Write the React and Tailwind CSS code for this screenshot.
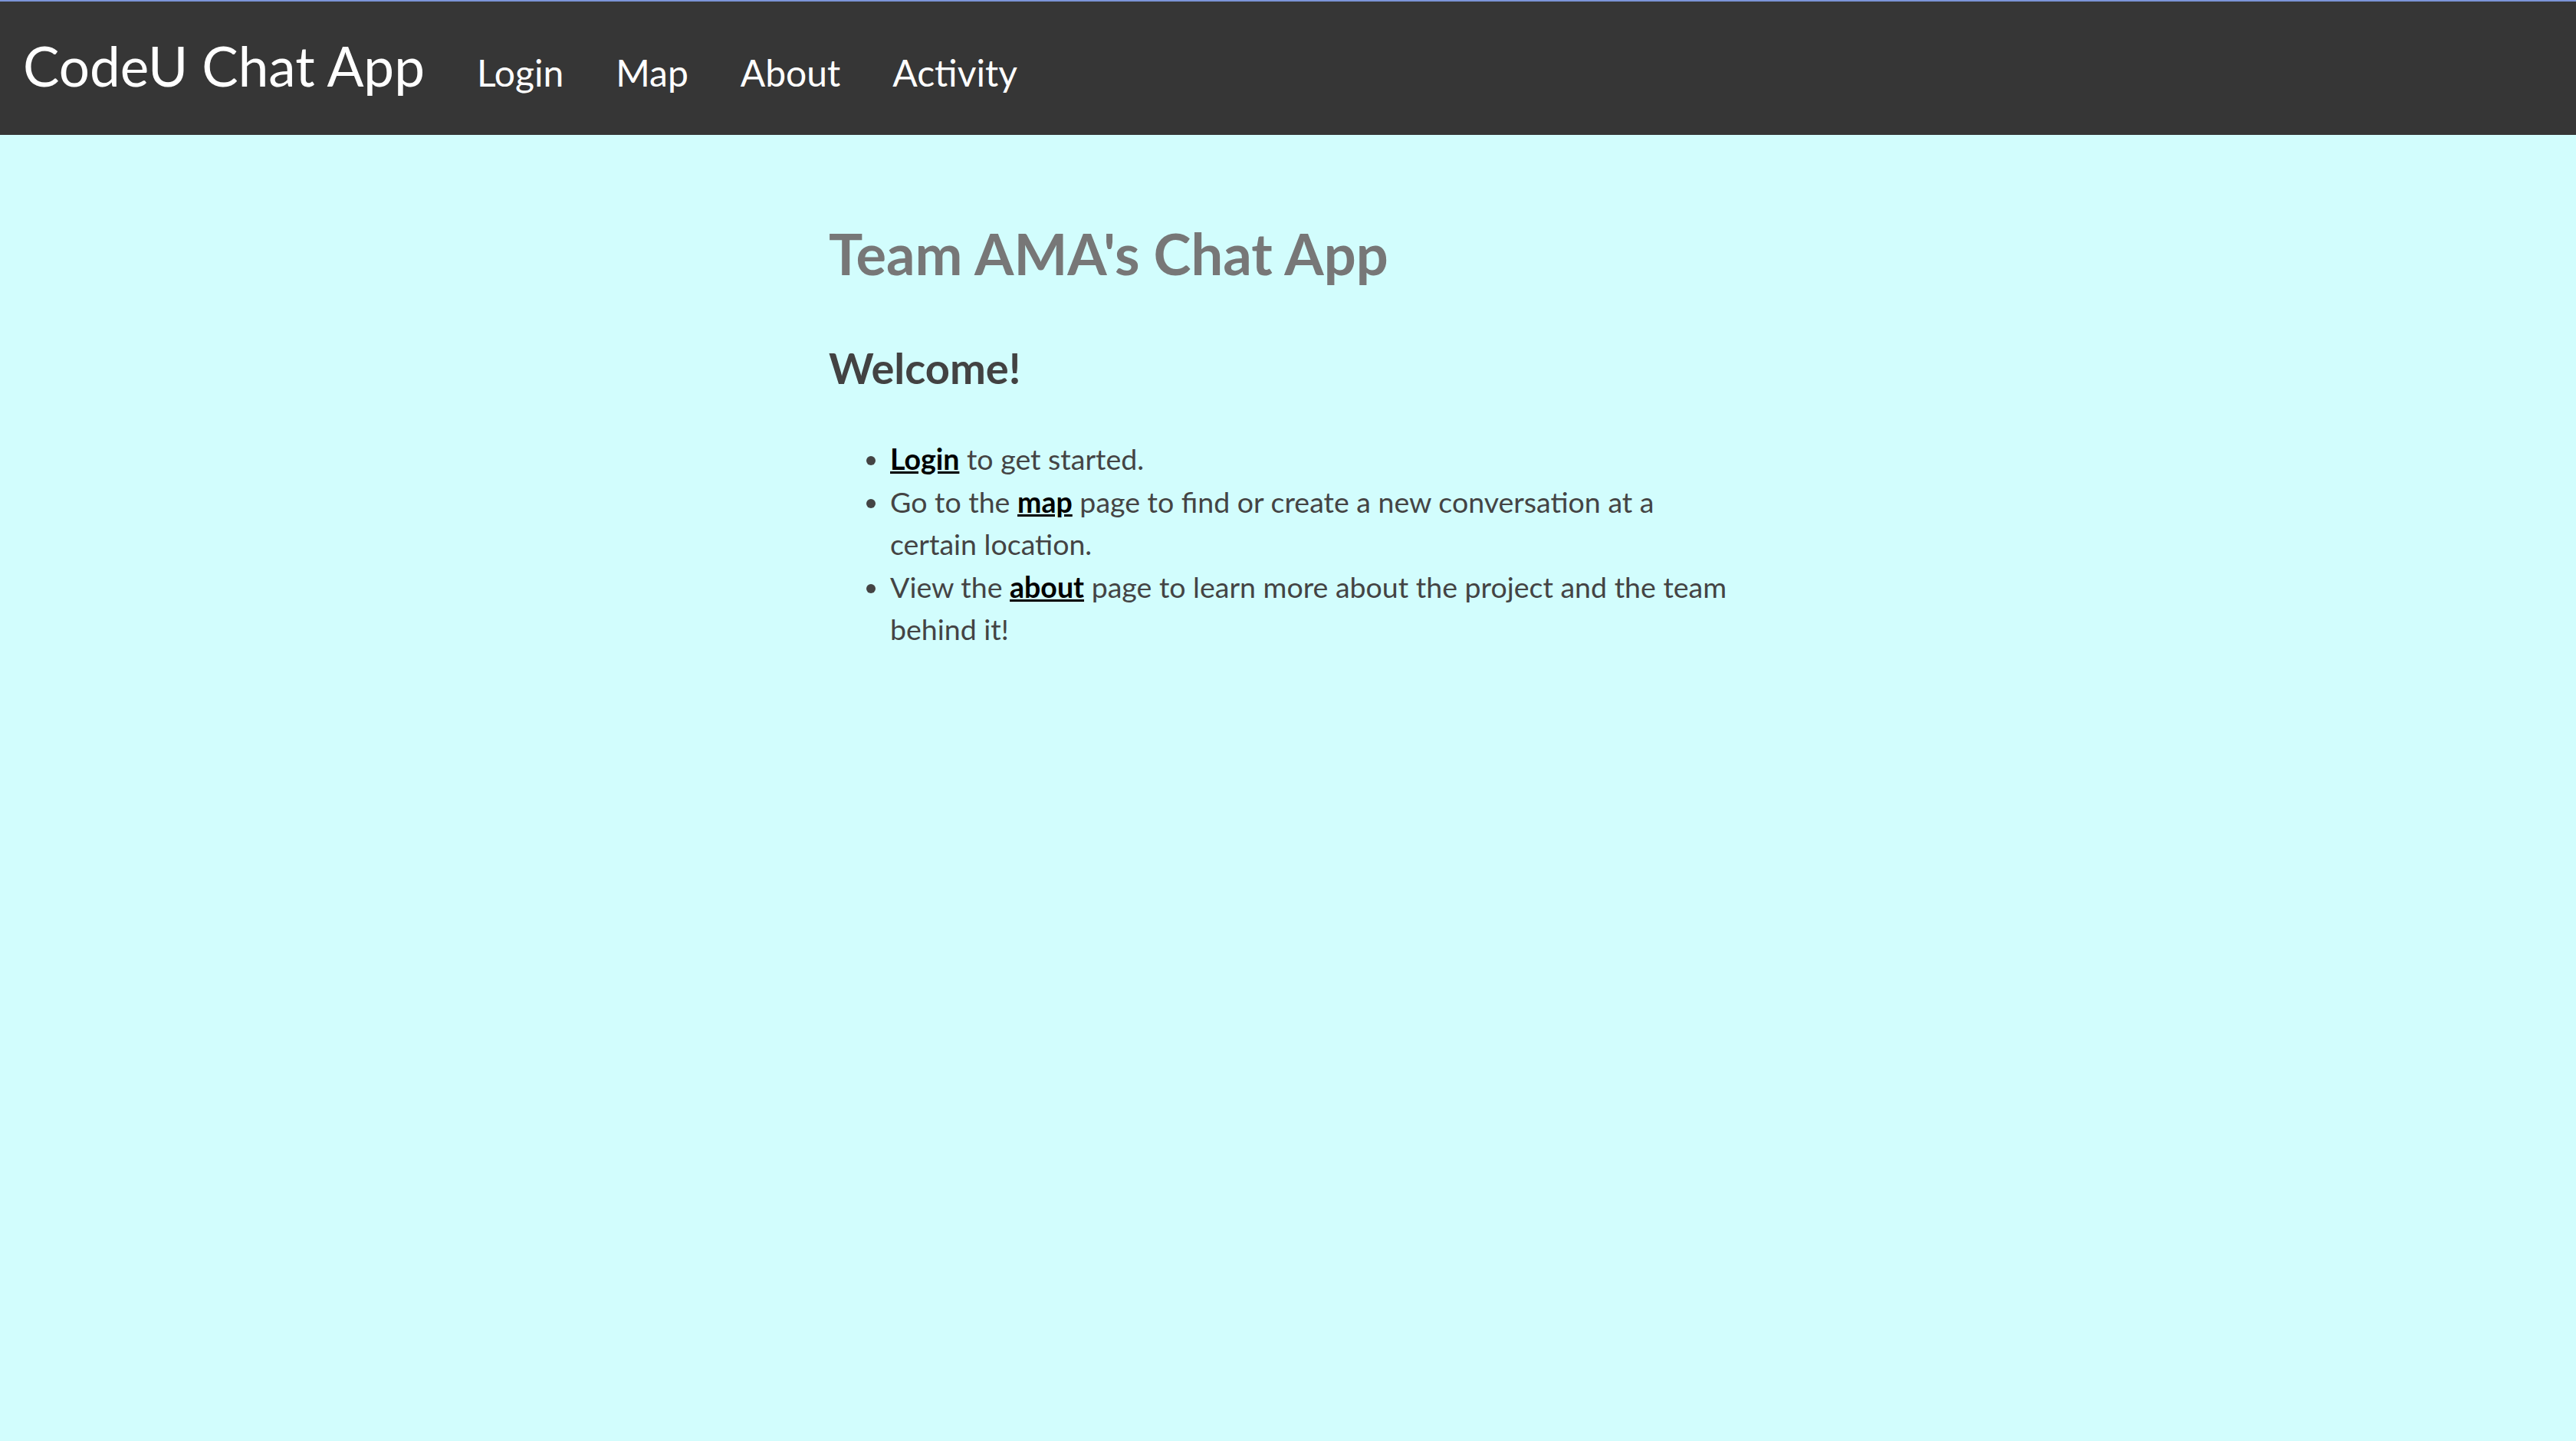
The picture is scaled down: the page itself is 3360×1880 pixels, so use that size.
export default function App() {
  const navLinks = ['Login', 'Map', 'About', 'Activity'];

  return (
    <div className="min-h-[1880px] bg-[#d2fdfd] font-['Lato',sans-serif]">
      <nav className="h-[176px] bg-[#363636] border-t-2 border-[#7b94d8] flex items-baseline gap-[68px] pl-[30px] pt-[48px]">
        <a href="#" className="text-[71px] leading-none text-white">
          CodeU Chat App
        </a>
        {navLinks.map((link) => (
          <a key={link} href="#" className="text-[48px] leading-none text-white">
            {link}
          </a>
        ))}
      </nav>

      <div className="w-[1198px] mx-auto">
        <h1 className="mt-[118px] text-[74px] leading-none font-bold text-[#777777]">
          Team AMA's Chat App
        </h1>
        <h2 className="mt-[84px] text-[56px] leading-none font-bold text-[#424242]">
          Welcome!
        </h2>
        <ul className="mt-[63px] w-[1185px] list-disc pl-[80px] text-[37.5px] leading-[55.5px] text-[#444444]">
          <li>
            <a href="#" className="font-bold text-black underline">Login</a> to get started.
          </li>
          <li>
            Go to the <a href="#" className="font-bold text-black underline">map</a> page to find or
            create a new conversation at a certain location.
          </li>
          <li>
            View the <a href="#" className="font-bold text-black underline">about</a> page to learn
            more about the project and the team behind it!
          </li>
        </ul>
      </div>
    </div>
  );
}
